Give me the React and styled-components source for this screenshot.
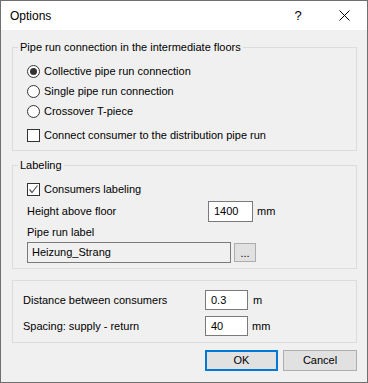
import React from "react";
import styled, { createGlobalStyle } from "styled-components";

const Global = createGlobalStyle`
  html, body { margin: 0; padding: 0; background: #ffffff; }
  body { font-family: "Liberation Sans", Arial, sans-serif; font-size: 11px; color: #000; }
  * { box-sizing: border-box; }
`;

const Window = styled.div`
  width: 368px;
  height: 383px;
  border: 1px solid #6f6f6f;
  display: flex;
  flex-direction: column;
  background: #f0f0f0;
`;

const TitleBar = styled.div`
  height: 29px;
  background: #ffffff;
  display: flex;
  align-items: center;
  padding-left: 9px;
`;

const TitleText = styled.div`
  flex: 1;
  font-size: 12px;
  line-height: 16px;
`;

const CaptionButton = styled.div`
  width: 46px;
  height: 29px;
  display: flex;
  align-items: center;
  justify-content: center;
  font-size: 13px;
`;

const Body = styled.div`
  flex: 1;
  display: flex;
  flex-direction: column;
  padding: 10px 10px 0 11px;
`;

const GroupBox = styled.fieldset`
  margin: ${(p) => p.$mt || 0}px 0 0 0;
  padding: 0;
  border: 1px solid #dcdcdc;
  min-width: 0;
`;

const Legend = styled.legend`
  margin-left: 5px;
  padding: 0 2px;
  line-height: 15px;
  font-size: 11px;
`;

const GroupContent = styled.div`
  display: flex;
  flex-direction: column;
  padding: ${(p) => p.$pad};
`;

const OptionRow = styled.div`
  display: flex;
  align-items: center;
  gap: 4px;
  height: ${(p) => p.$h || 20}px;
  margin-top: ${(p) => p.$mt || 0}px;
  line-height: 15px;
`;

const RadioMark = styled.span`
  width: 13px;
  height: 13px;
  border-radius: 50%;
  border: 1px solid #333333;
  background: #ffffff;
  display: flex;
  align-items: center;
  justify-content: center;
  flex: none;
  &::after {
    content: "";
    width: 7px;
    height: 7px;
    border-radius: 50%;
    background: ${(p) => (p.$checked ? "#333333" : "transparent")};
  }
`;

const CheckMark = styled.span`
  width: 13px;
  height: 13px;
  border: 1px solid #333333;
  background: #ffffff;
  display: flex;
  flex: none;
`;

const FieldRow = styled.div`
  display: flex;
  align-items: center;
  height: ${(p) => p.$h || 21}px;
  margin-top: ${(p) => p.$mt || 0}px;
  line-height: 15px;
`;

const FieldLabel = styled.div`
  width: ${(p) => p.$w}px;
  flex: none;
`;

const TextBox = styled.div`
  width: ${(p) => p.$w}px;
  height: ${(p) => p.$h || 21}px;
  border: 1px solid #7a7a7a;
  background: ${(p) => (p.$grey ? "#f0f0f0" : "#ffffff")};
  padding-left: ${(p) => p.$pl || 5}px;
  display: flex;
  align-items: center;
  flex: none;
  line-height: 15px;
`;

const Unit = styled.div`
  margin-left: ${(p) => p.$ml || 4}px;
`;

const SmallButton = styled.div`
  width: 22px;
  height: 19px;
  margin-left: 3px;
  border: 1px solid #adadad;
  background: #e1e1e1;
  display: flex;
  align-items: flex-end;
  justify-content: center;
  padding-bottom: 2px;
  line-height: 12px;
`;

const ButtonBar = styled.div`
  display: flex;
  justify-content: flex-end;
  gap: 5px;
  margin-top: 7px;
`;

const DialogButton = styled.div`
  width: ${(p) => p.$w}px;
  height: 21px;
  background: #e1e1e1;
  border: ${(p) => (p.$default ? "2px solid #0078d7" : "1px solid #adadad")};
  display: flex;
  align-items: center;
  justify-content: center;
  line-height: 15px;
`;

const Radio = ({ checked, children, mt }) => (
  <OptionRow $mt={mt}>
    <RadioMark $checked={checked} />
    <span>{children}</span>
  </OptionRow>
);

const Check = ({ checked, children, mt }) => (
  <OptionRow $mt={mt}>
    <CheckMark>
      {checked && (
        <svg width="11" height="11" viewBox="0 0 11 11">
          <polyline points="1.5,5.5 4,8.5 9.5,1.5" fill="none" stroke="#555" strokeWidth="1.2" />
        </svg>
      )}
    </CheckMark>
    <span>{children}</span>
  </OptionRow>
);

export default function App() {
  return (
    <>
      <Global />
      <Window>
        <TitleBar>
          <TitleText>Options</TitleText>
          <CaptionButton>?</CaptionButton>
          <CaptionButton>
            <svg width="11" height="11" viewBox="0 0 11 11">
              <path d="M0.5 0.5 L10.5 10.5 M10.5 0.5 L0.5 10.5" stroke="#000" strokeWidth="1" fill="none" />
            </svg>
          </CaptionButton>
        </TitleBar>
        <Body>
          <GroupBox>
            <Legend>Pipe run connection in the intermediate floors</Legend>
            <GroupContent $pad="6px 0 5px 14px">
              <Radio checked>Collective pipe run connection</Radio>
              <Radio>Single pipe run connection</Radio>
              <Radio>Crossover T-piece</Radio>
              <Check mt={4}>Connect consumer to the distribution pipe run</Check>
            </GroupContent>
          </GroupBox>
          <GroupBox $mt={7}>
            <Legend>Labeling</Legend>
            <GroupContent $pad="6px 0 5px 14px">
              <Check checked>Consumers labeling</Check>
              <FieldRow $mt={2}>
                <FieldLabel $w={181}>Height above floor</FieldLabel>
                <TextBox $w={45}>1400</TextBox>
                <Unit>mm</Unit>
              </FieldRow>
              <FieldRow $h={18} $mt={1}>
                <FieldLabel $w={181}>Pipe run label</FieldLabel>
              </FieldRow>
              <FieldRow $mt={1}>
                <TextBox $w={204} $grey $pl={4}>Heizung_Strang</TextBox>
                <SmallButton>...</SmallButton>
              </FieldRow>
            </GroupContent>
          </GroupBox>
          <GroupBox $mt={11}>
            <GroupContent $pad="9px 0 6px 10px">
              <FieldRow $h={20}>
                <FieldLabel $w={182}>Distance between consumers</FieldLabel>
                <TextBox $w={43} $h={20}>0.3</TextBox>
                <Unit $ml={5}>m</Unit>
              </FieldRow>
              <FieldRow $h={20} $mt={6}>
                <FieldLabel $w={182}>Spacing: supply - return</FieldLabel>
                <TextBox $w={43} $h={20}>40</TextBox>
                <Unit $ml={4}>mm</Unit>
              </FieldRow>
            </GroupContent>
          </GroupBox>
          <ButtonBar>
            <DialogButton $w={73} $default>OK</DialogButton>
            <DialogButton $w={74}>Cancel</DialogButton>
          </ButtonBar>
        </Body>
      </Window>
    </>
  );
}
